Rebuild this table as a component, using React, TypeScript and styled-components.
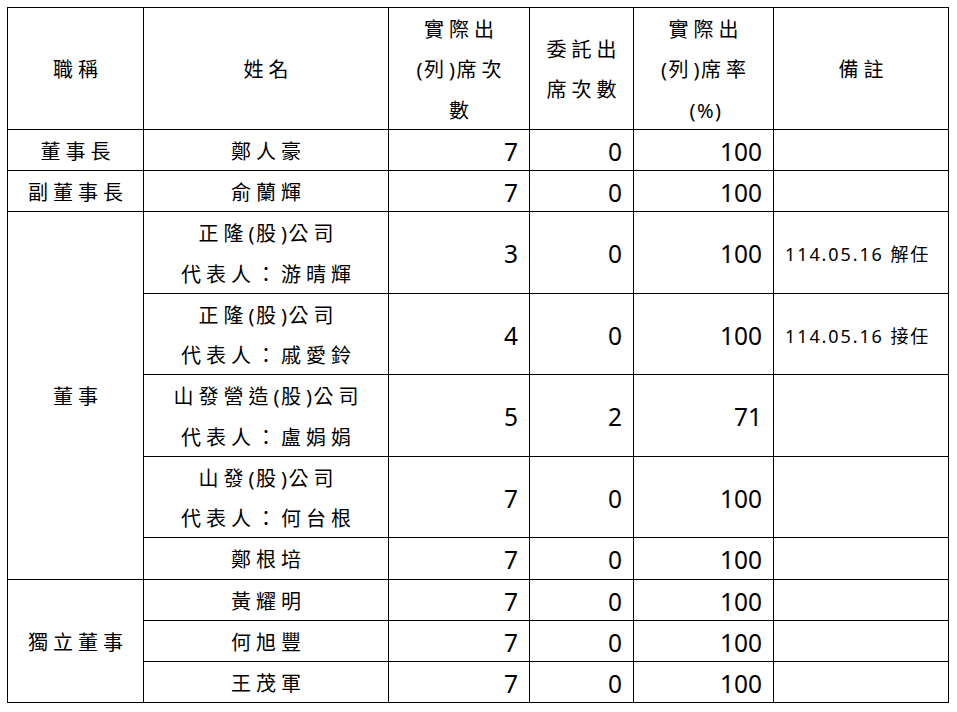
import React from "react";
import styled, { createGlobalStyle } from "styled-components";

const Global = createGlobalStyle`
  html, body { margin: 0; padding: 0; background: #fff; }
  body { font-family: "Noto Sans", "Noto Sans CJK TC", sans-serif; color: #000; }
`;

const Page = styled.div`
  padding: 7px 0 0 7px;
`;

const Table = styled.table`
  border-collapse: collapse;
  table-layout: fixed;
  width: 941px;
  font-family: "Noto Sans", "Noto Sans CJK TC", sans-serif;
`;

const Cell = styled.td<{ $align?: "left" | "center" | "right" }>`
  border: 1px solid #000;
  padding: 0;
  line-height: 40.25px;
  vertical-align: middle;
  text-align: ${(p) => p.$align ?? "center"};
`;

const HeadCell = styled(Cell).attrs({ as: "th" })`
  font-weight: 400;
  font-size: 20px;
  letter-spacing: 5px;
  padding-left: 5px;
`;

const TextCell = styled(Cell)`
  font-size: 20px;
  letter-spacing: 5px;
  padding-left: 5px;
`;

const NumCell = styled(Cell)`
  font-size: 24.5px;
  text-align: right;
  padding-right: 11px;
`;

const NoteCell = styled(Cell)`
  font-size: 18px;
  letter-spacing: 1.9px;
  text-align: left;
  padding-left: 11px;
`;

const Lowered = styled.span`
  line-height: 1;
  vertical-align: -2px;
`;

const Latin = styled.span`
  letter-spacing: 1.5px;
`;

type Row = {
  title?: string;
  span?: number;
  name: string[];
  attend: number;
  proxy: number;
  rate: number;
  note?: string;
};

const rows: Row[] = [
  { title: "董事長", span: 1, name: ["鄭人豪"], attend: 7, proxy: 0, rate: 100 },
  { title: "副董事長", span: 1, name: ["俞蘭輝"], attend: 7, proxy: 0, rate: 100 },
  {
    title: "董事",
    span: 5,
    name: ["正隆(股)公司", "代表人：游晴輝"],
    attend: 3,
    proxy: 0,
    rate: 100,
    note: "114.05.16 解任",
  },
  { name: ["正隆(股)公司", "代表人：戚愛鈴"], attend: 4, proxy: 0, rate: 100, note: "114.05.16 接任" },
  { name: ["山發營造(股)公司", "代表人：盧娟娟"], attend: 5, proxy: 2, rate: 71 },
  { name: ["山發(股)公司", "代表人：何台根"], attend: 7, proxy: 0, rate: 100 },
  { name: ["鄭根培"], attend: 7, proxy: 0, rate: 100 },
  { title: "獨立董事", span: 3, name: ["黃耀明"], attend: 7, proxy: 0, rate: 100 },
  { name: ["何旭豐"], attend: 7, proxy: 0, rate: 100 },
  { name: ["王茂軍"], attend: 7, proxy: 0, rate: 100 },
];

const Mixed = ({ text }: { text: string }) => (
  <>
    {text.split(/([()%]+)/).map((part, i) =>
      /^[()%]+$/.test(part) ? <Latin key={i}>{part}</Latin> : <React.Fragment key={i}>{part}</React.Fragment>
    )}
  </>
);

const Lines = ({ lines }: { lines: string[] }) => (
  <>
    {lines.map((l, i) => (
      <React.Fragment key={i}>
        {i > 0 && <br />}
        <Lowered>
          <Mixed text={l} />
        </Lowered>
      </React.Fragment>
    ))}
  </>
);

export default function App() {
  return (
    <Page>
      <Global />
      <Table>
        <colgroup>
          <col style={{ width: 136 }} />
          <col style={{ width: 245 }} />
          <col style={{ width: 141 }} />
          <col style={{ width: 104 }} />
          <col style={{ width: 140 }} />
          <col style={{ width: 175 }} />
        </colgroup>
        <thead>
          <tr>
            <HeadCell>
              <Lines lines={["職稱"]} />
            </HeadCell>
            <HeadCell>
              <Lines lines={["姓名"]} />
            </HeadCell>
            <HeadCell>
              <Lines lines={["實際出", "(列)席次", "數"]} />
            </HeadCell>
            <HeadCell>
              <Lines lines={["委託出", "席次數"]} />
            </HeadCell>
            <HeadCell>
              <Lines lines={["實際出", "(列)席率", "(%)"]} />
            </HeadCell>
            <HeadCell>
              <Lines lines={["備註"]} />
            </HeadCell>
          </tr>
        </thead>
        <tbody>
          {rows.map((r, i) => (
            <tr key={i}>
              {r.title && (
                <TextCell rowSpan={r.span}>
                  <Lines lines={[r.title]} />
                </TextCell>
              )}
              <TextCell>
                <Lines lines={r.name} />
              </TextCell>
              <NumCell>
                <Lowered>{r.attend}</Lowered>
              </NumCell>
              <NumCell>
                <Lowered>{r.proxy}</Lowered>
              </NumCell>
              <NumCell>
                <Lowered>{r.rate}</Lowered>
              </NumCell>
              <NoteCell>{r.note ? <Lowered>{r.note}</Lowered> : ""}</NoteCell>
            </tr>
          ))}
        </tbody>
      </Table>
    </Page>
  );
}
